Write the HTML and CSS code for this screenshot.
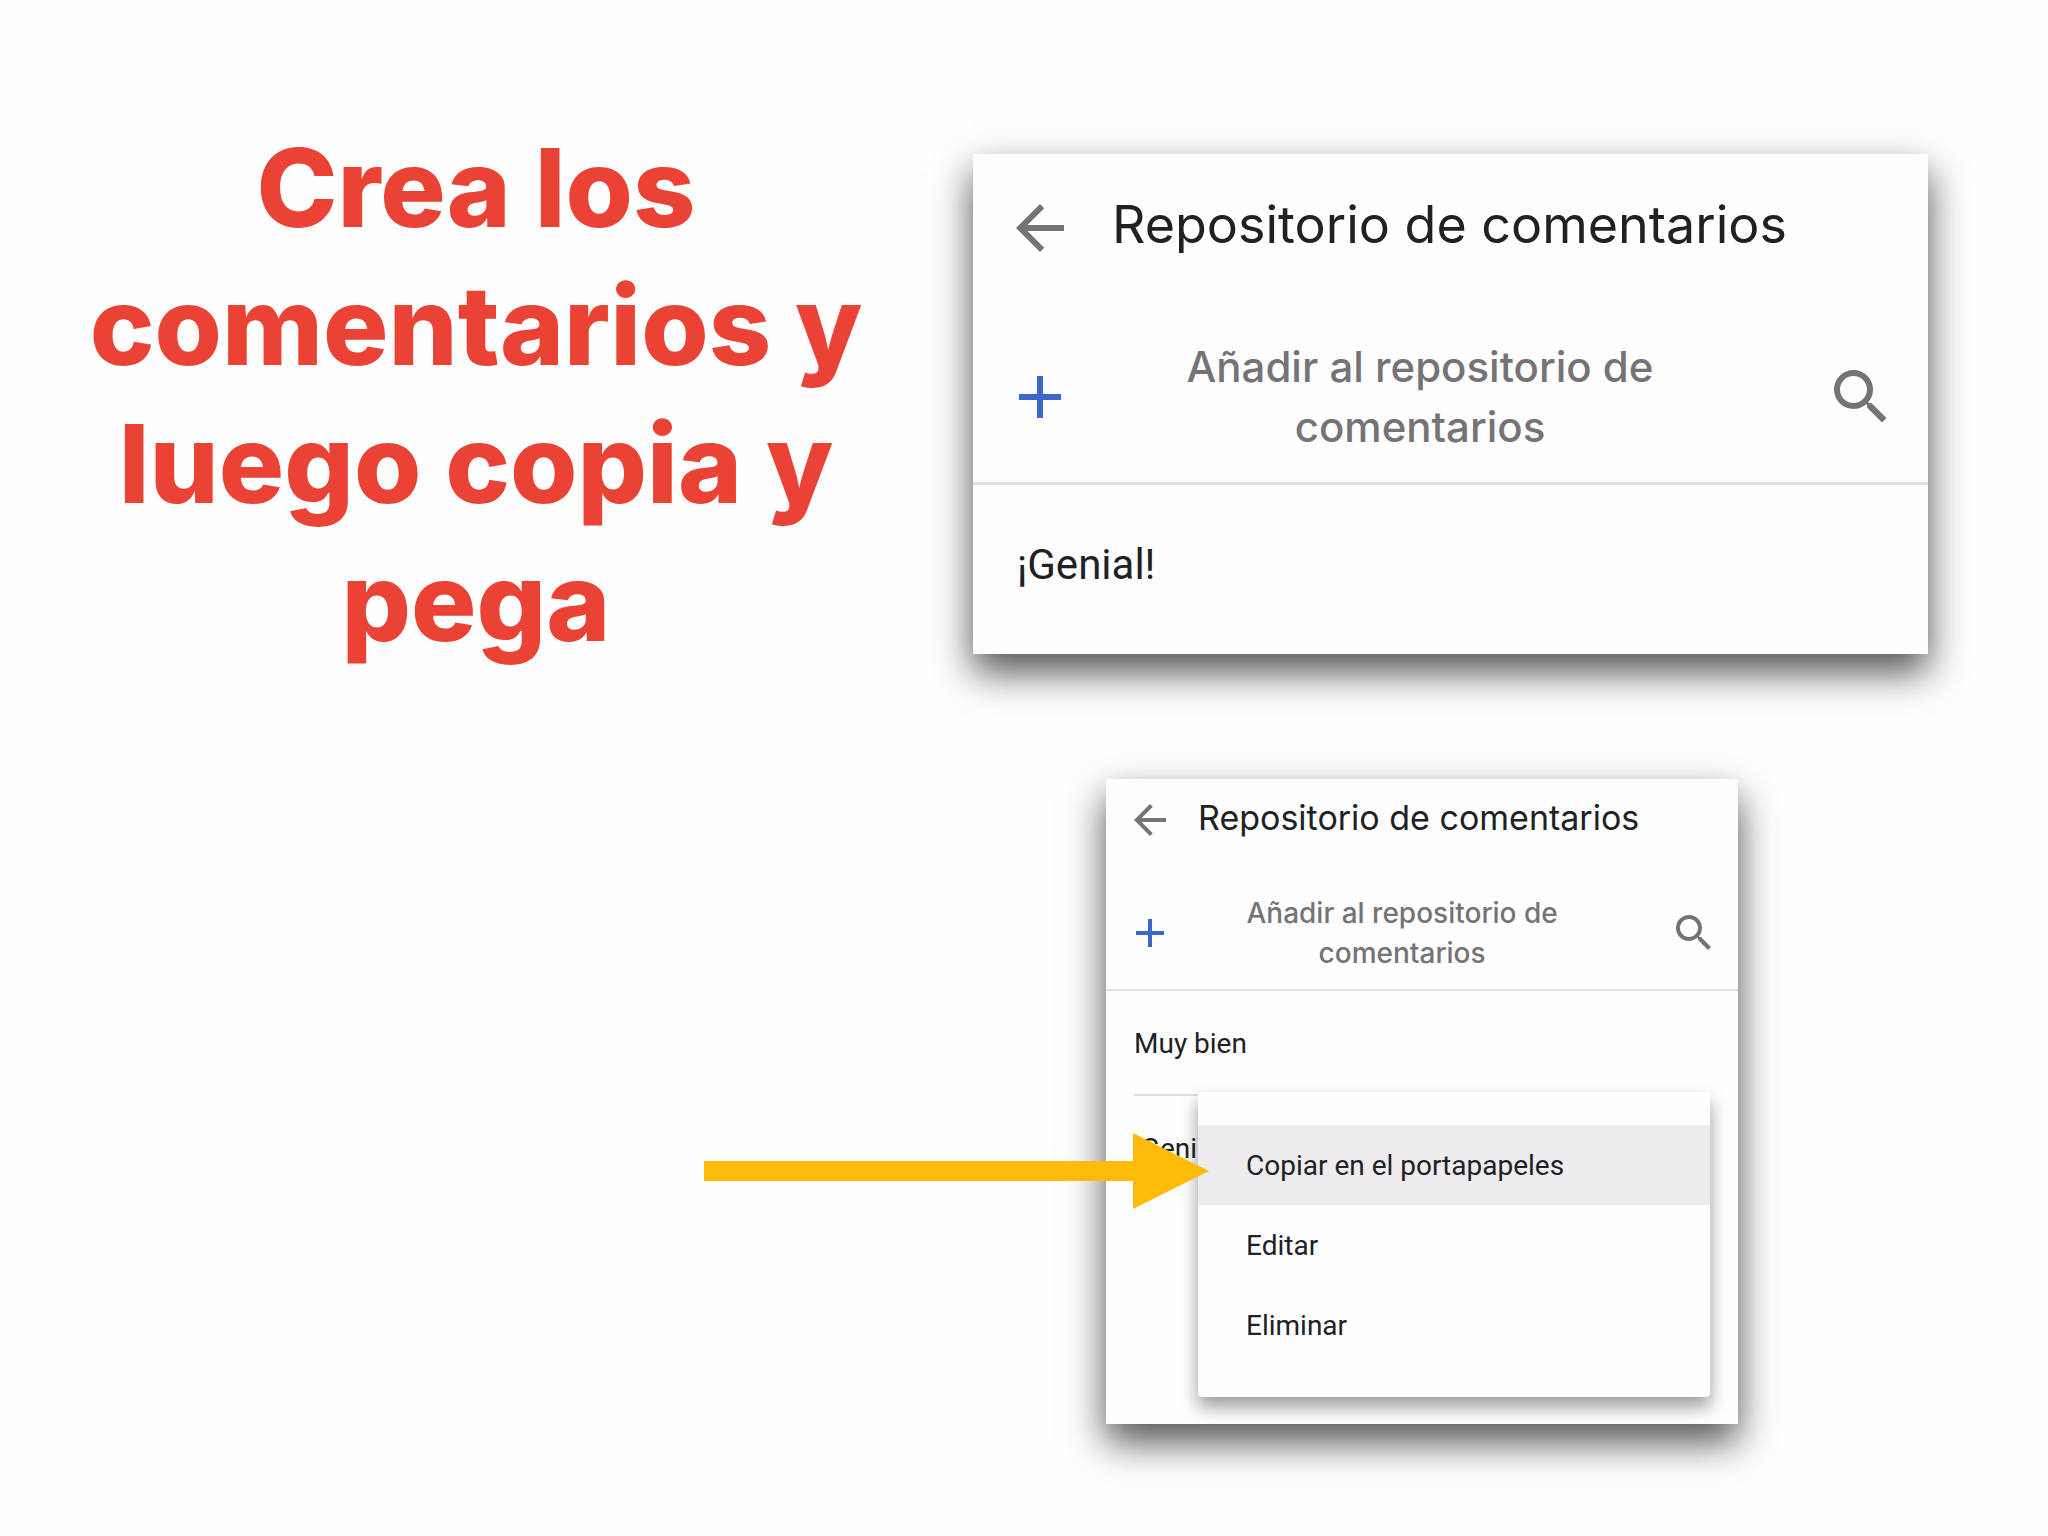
FILE: index.html
```html
<!DOCTYPE html>
<html lang="es">
<head>
    <meta charset="UTF-8">
    <meta name="viewport" content="width=device-width, initial-scale=1.0">
    <title>Repositorio de comentarios</title>
    <link rel="stylesheet" href="styles.css">
</head>
<body>
    <main class="slide">
        <h1 class="titulo">Crea los<br>comentarios y<br>luego copia y<br>pega</h1>

        <div class="paneles">
            <section class="panel panel-grande">
                <div class="cabecera">
                    <button class="icono" aria-label="Volver">
                        <svg viewBox="0 0 24 24"><path d="M20 11H7.83l5.59-5.59L12 4l-8 8 8 8 1.41-1.41L7.83 13H20v-2z"/></svg>
                    </button>
                    <h2>Repositorio de comentarios</h2>
                </div>
                <div class="acciones">
                    <button class="agregar">
                        <svg viewBox="0 0 24 24"><path d="M19 13h-6v6h-2v-6H5v-2h6V5h2v6h6v2z"/></svg>
                        <span>Añadir al repositorio de comentarios</span>
                    </button>
                    <button class="icono" aria-label="Buscar">
                        <svg viewBox="0 0 24 24"><path d="M15.5 14h-.79l-.28-.27A6.47 6.47 0 0 0 16 9.5 6.5 6.5 0 1 0 9.5 16c1.61 0 3.09-.59 4.23-1.57l.27.28v.79l5 4.99L20.49 19l-4.99-5zm-6 0C7.01 14 5 11.99 5 9.5S7.01 5 9.5 5 14 7.01 14 9.5 11.99 14 9.5 14z"/></svg>
                    </button>
                </div>
                <ul class="lista">
                    <li>¡Genial!</li>
                </ul>
            </section>

            <section class="panel panel-chico">
                <div class="cabecera">
                    <button class="icono" aria-label="Volver">
                        <svg viewBox="0 0 24 24"><path d="M20 11H7.83l5.59-5.59L12 4l-8 8 8 8 1.41-1.41L7.83 13H20v-2z"/></svg>
                    </button>
                    <h2>Repositorio de comentarios</h2>
                </div>
                <div class="acciones">
                    <button class="agregar">
                        <svg viewBox="0 0 24 24"><path d="M19 13h-6v6h-2v-6H5v-2h6V5h2v6h6v2z"/></svg>
                        <span>Añadir al repositorio de comentarios</span>
                    </button>
                    <button class="icono" aria-label="Buscar">
                        <svg viewBox="0 0 24 24"><path d="M15.5 14h-.79l-.28-.27A6.47 6.47 0 0 0 16 9.5 6.5 6.5 0 1 0 9.5 16c1.61 0 3.09-.59 4.23-1.57l.27.28v.79l5 4.99L20.49 19l-4.99-5zm-6 0C7.01 14 5 11.99 5 9.5S7.01 5 9.5 5 14 7.01 14 9.5 11.99 14 9.5 14z"/></svg>
                    </button>
                </div>
                <ul class="lista">
                    <li>Muy bien</li>
                    <li>¡Genial!</li>
                </ul>

                <div class="menu">
                    <button class="activo">Copiar en el portapapeles</button>
                    <button>Editar</button>
                    <button>Eliminar</button>
                </div>
                <svg class="flecha" viewBox="0 0 505 76"><path d="M0 28H429V0L505 38L429 76V48H0z"/></svg>
            </section>
        </div>
    </main>
</body>
</html>
```

FILE: styles.css
```css
* {
    box-sizing: border-box;
}

body {
    margin: 0;
    background-color: #fefefe;
    color: #202124;
    font-family: Roboto, sans-serif;
}

.slide {
    display: grid;
    grid-template-columns: 776fr 955fr;
    column-gap: 109px;
    align-items: start;
    padding: 118px 120px 64px 88px;
}

.titulo {
    margin: 0;
    color: #ea4335;
    font-family: Inter, sans-serif;
    font-size: 109px;
    font-weight: 800;
    line-height: 138px;
    text-align: center;
    white-space: nowrap;
}

.paneles {
    display: flex;
    flex-direction: column;
    gap: 125px;
    padding-top: 36px;
}

/* Paneles */
.panel {
    position: relative;
    background: #fefefe;
    box-shadow: 0 18px 36px rgba(10, 8, 12, 0.7);
}

.cabecera {
    display: flex;
    align-items: flex-start;
}

.cabecera h2 {
    margin: 0;
    font-family: Inter, sans-serif;
    font-weight: 400;
}

.acciones {
    display: flex;
    align-items: center;
    border-bottom: 2px solid #e0dfe2;
}

button {
    padding: 0;
    border: none;
    background: none;
    color: inherit;
    font-family: inherit;
    cursor: pointer;
}

svg {
    display: block;
    flex: none;
}

.icono {
    flex: none;
    fill: #757376;
}

.agregar {
    display: flex;
    flex: 1;
    align-items: center;
    color: #757376;
    font-family: Inter, sans-serif;
    font-weight: 500;
}

.agregar svg {
    fill: #3c66cc;
}

.agregar span {
    flex: 1;
}

.lista {
    margin: 0;
    padding: 0;
    list-style: none;
}

.lista li + li {
    border-top: 2px solid #e0dfe2;
}

/* Panel grande */
.panel-grande .cabecera {
    gap: 36px;
    padding: 38px 31px 73px;
}

.panel-grande h2 {
    font-size: 52px;
    line-height: 66px;
}

.panel-grande svg {
    width: 72px;
    height: 72px;
}

.panel-grande .acciones {
    gap: 93px;
    padding: 0 31px 25px;
    border-bottom-width: 3px;
}

.panel-grande .agregar {
    gap: 32px;
    font-size: 42px;
    line-height: 60px;
}

.panel-grande .lista {
    padding: 56px 44px 65px;
    font-size: 42px;
    line-height: 48px;
}

/* Panel chico */
.panel-chico {
    width: 66.2%;
    margin-left: 133px;
}

.panel-chico .cabecera {
    gap: 24px;
    padding: 17px 20px 49px;
}

.panel-chico h2 {
    font-size: 34px;
    line-height: 44px;
}

.panel-chico .icono svg,
.panel-chico .agregar svg {
    width: 48px;
    height: 48px;
}

.panel-chico .acciones {
    gap: 62px;
    padding: 0 20px 16px;
}

.panel-chico .agregar {
    gap: 22px;
    font-size: 28px;
    line-height: 40px;
}

.panel-chico .lista {
    padding: 0 28px 225px;
    font-size: 28px;
    line-height: 32px;
}

.panel-chico .lista li {
    padding: 37px 0 34px;
}

/* Menú contextual sobre la lista */
.menu {
    position: absolute;
    top: 313px;
    left: 92px;
    right: 28px;
    padding: 33px 0 32px;
    border-radius: 4px;
    background: #fefefe;
    box-shadow: 0 10px 18px rgba(10, 8, 12, 0.4);
}

.menu button {
    display: block;
    width: 100%;
    padding: 25px 48px 23px;
    font-size: 28px;
    line-height: 32px;
    text-align: left;
}

.menu .activo {
    background: #eeecef;
}

.flecha {
    position: absolute;
    top: 354px;
    left: -402px;
    width: 505px;
    height: 76px;
    fill: #fcbc09;
    pointer-events: none;
}
```
